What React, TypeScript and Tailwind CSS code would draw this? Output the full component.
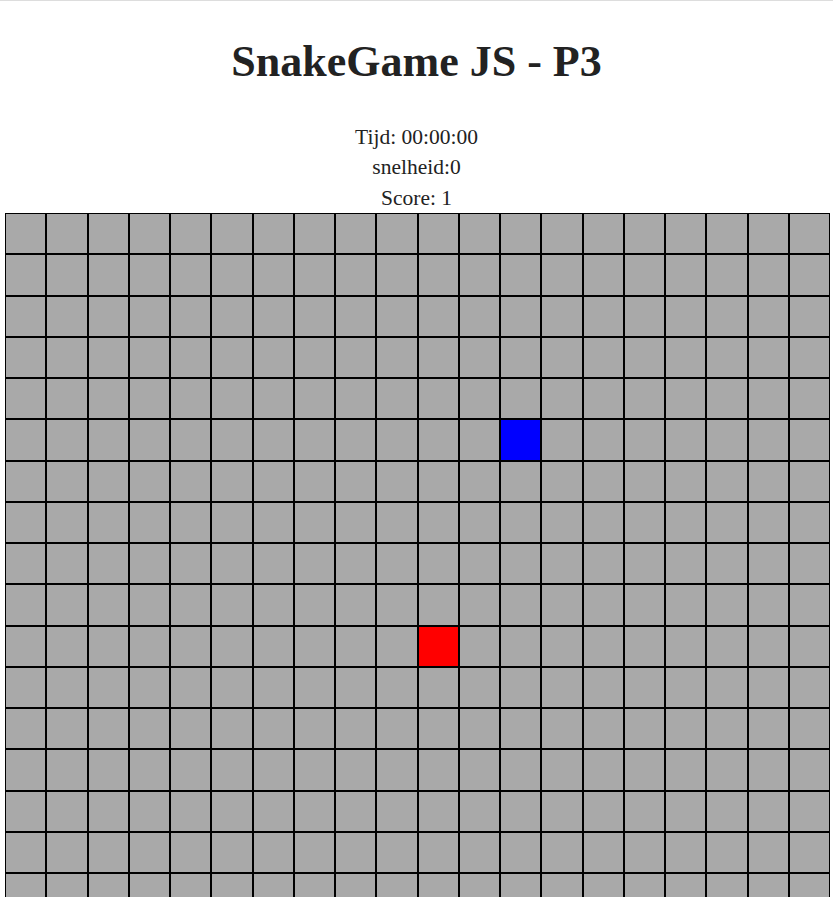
import React from 'react';

const COLS = 20;
const ROWS = 17;

// positie van de slang en het voedsel
const snake = { row: 5, col: 12 };
const food = { row: 10, col: 10 };

function cellColor(r: number, c: number) {
  if (r === snake.row && c === snake.col) return 'bg-[#0000ff]';
  if (r === food.row && c === food.col) return 'bg-[#ff0000]';
  return 'bg-[#a9a9a9]';
}

export default function App() {
  const cells = [];
  for (let r = 0; r < ROWS; r++) {
    for (let c = 0; c < COLS; c++) {
      cells.push(
        <div key={`${r}-${c}`} className={`h-[41.25px] border border-black ${cellColor(r, c)}`} />
      );
    }
  }

  return (
    <div className="h-[897px] overflow-hidden border-t border-[#dddddd] bg-white text-[#222222] font-['Liberation_Serif',serif]">
      <h1 className="mt-[36px] text-center text-[44px] font-bold leading-[50px]">SnakeGame JS - P3</h1>
      <div className="mt-[34.5px] text-center text-[21.5px] leading-[30.5px]">
        <p>Tijd: 00:00:00</p>
        <p>snelheid:0</p>
        <p>Score: 1</p>
      </div>
      <div className="ml-[5px] grid w-[825px] grid-cols-20">{cells}</div>
    </div>
  );
}
